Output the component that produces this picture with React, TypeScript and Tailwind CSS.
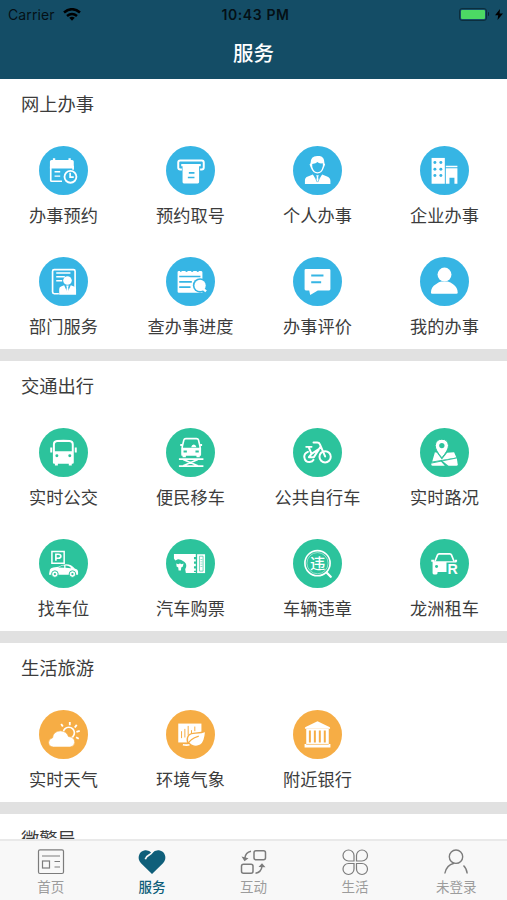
import type { ReactNode } from 'react'

interface Service {
  label: string
  icon: ReactNode
}

interface Section {
  title: string
  // text-* drives currentColor for the cut-outs inside each icon
  color: string
  items: Service[]
}

const CJK = "font-['Noto_Sans_CJK_SC',sans-serif]"

const sections: Section[] = [
  {
    title: '网上办事',
    color: 'text-[#36b5e4]',
    items: [
      {
        label: '办事预约',
        icon: (
          <>
            <path d="M33 68V47q0-5 5-5h4v-5h7v5h40v-5h7v5h4q5 0 5 5v21z" fill="#fff" />
            <path d="M35.500 62v42q0 2.500 3 2.500h31M103 60v12" stroke="#fff" strokeWidth="5" />
            <path d="M47 78h17M47 91h17" stroke="#fff" strokeWidth="4.500" />
            <circle cx="95" cy="93" r="18" stroke="#fff" strokeWidth="5.500" fill="currentColor" />
            <path d="M94 81v13h11" stroke="#fff" strokeWidth="5" />
          </>
        ),
      },
      {
        label: '预约取号',
        icon: (
          <>
            <path d="M48 71h-5q-6 0-6-6V50q0-6 6-6h65q6 0 6 6v15q0 6-6 6h-5" stroke="#fff" strokeWidth="6" />
            <path d="M46 54h59v7h-5v48q0 4-4 4H54q-4 0-4-4V61h-4z" fill="#fff" />
            <path d="M69 81h17M66 95h20" stroke="currentColor" strokeWidth="5" />
          </>
        ),
      },
      {
        label: '个人办事',
        icon: (
          <>
            <path d="M53 52q0-22 20-22h8q14 2 14 22l2 4-4 10q-5 17-19 17T54 66l-4-10z" fill="#fff" />
            <path d="M58 54q12-2 16-6 4 6 16 4 2 10-3 18-4 9-13 9t-13-9q-4-8-3-16z" fill="currentColor" />
            <path d="M36 115v-11q0-9 9-12l15-6 14 20 14-20 15 6q10 3 10 14v9z" fill="#fff" />
            <path d="M70 88h8l-2 6 2 14-4 4-4-4 2-14z" fill="#fff" />
            <path d="m62 84 11 25M86 84l-11 25" stroke="currentColor" strokeWidth="2" />
          </>
        ),
      },
      {
        label: '企业办事',
        icon: (
          <>
            <path d="M35 36h40v78H35z" fill="#fff" />
            <path d="M78 60h35v4H78zM78 67h35v47h-9V96H89v18H78z" fill="#fff" />
            <g fill="currentColor">
              <circle cx="45" cy="50" r="4.500" />
              <circle cx="63" cy="50" r="4.500" />
              <circle cx="45" cy="70" r="4.500" />
              <circle cx="63" cy="70" r="4.500" />
              <circle cx="45" cy="89" r="4.500" />
              <circle cx="63" cy="89" r="4.500" />
            </g>
          </>
        ),
      },
      {
        label: '部门服务',
        icon: (
          <>
            <path d="M60 111H46q-5 0-5-5V43q0-5 5-5h58q5 0 5 5v64" stroke="#fff" strokeWidth="5" />
            <path d="M52 48h43M52 60h26M52 72h18" stroke="#fff" strokeWidth="4.500" />
            <circle cx="86" cy="71" r="13" fill="#fff" />
            <path d="M61 114V97q0-7 7-9l8-3 10 23 10-23 8 3q8 2 8 9v17z" fill="#fff" />
            <path d="M82 86h8l-2 6 2 12-4 5-4-5 2-12z" fill="#fff" />
          </>
        ),
      },
      {
        label: '查办事进度',
        icon: (
          <>
            <path d="M35 45q0-3 4-3h3q2 6 6 0h10q4 7 8 0h9q4 7 8 0h9q4 7 8 0h5q5 0 5 4v62H39q-4 0-4-4z" fill="#fff" />
            <path d="M40 59h64M40 75h38M40 91h34" stroke="currentColor" strokeWidth="5" />
            <circle cx="103" cy="86" r="22" fill="currentColor" />
            <circle cx="103" cy="86" r="17" fill="#fff" />
            <path d="m112 96 9 8" stroke="#fff" strokeWidth="7" />
          </>
        ),
      },
      {
        label: '办事评价',
        icon: (
          <>
            <path d="M35 40q0-4 4-4h70q4 0 4 4v57q0 4-4 4H75l-23 14-3-14H39q-4 0-4-4z" fill="#fff" />
            <path d="M55 56h37M55 76h30" stroke="currentColor" strokeWidth="6" />
          </>
        ),
      },
      {
        label: '我的办事',
        icon: (
          <>
            <circle cx="74" cy="53" r="21" fill="#fff" />
            <path d="M33 108q0-18 15-26 10-7 16-8h20q8 2 16 8 14 9 14 26 0 3-4 3H37q-4 0-4-3z" fill="#fff" />
          </>
        ),
      },
    ],
  },
  {
    title: '交通出行',
    color: 'text-[#2cc39c]',
    items: [
      {
        label: '实时公交',
        icon: (
          <>
            <path d="M42 49q0-12 12-13 20-1 39 0 12 1 12 13v55q0 4-4 4h-2v5h-9v-5H57v5h-9v-5h-2q-4 0-4-4z" fill="#fff" />
            <path d="M48 70V50q0-8 8-8h35q8 0 8 8v20z" fill="currentColor" />
            <path d="M34 59h6v15h-6zM108 59h6v15h-6z" fill="#fff" />
            <circle cx="54" cy="84" r="4.500" fill="currentColor" />
            <circle cx="93" cy="84" r="4.500" fill="currentColor" />
          </>
        ),
      },
      {
        label: '便民移车',
        icon: (
          <>
            <path d="m49 57 5-21q1-4 6-4h32q5 0 6 4l5 21v24H49z" stroke="#fff" strokeWidth="5" />
            <path d="M47 60h59v21H47zM50 80h10v8H50zM92 80h10v8H92zM43 48h6v6h-6zM103 48h6v6h-6z" fill="#fff" />
            <path d="M76 58q2-8 8-8t8 8z" fill="#fff" />
            <path d="M53 71h10M89 71h10" stroke="currentColor" strokeWidth="6" />
            <path d="M39 94h74M39 115h74M52 95l44 19M96 95l-44 19" stroke="#fff" strokeWidth="5" />
          </>
        ),
      },
      {
        label: '公共自行车',
        icon: (
          <g stroke="#fff" strokeWidth="6" strokeLinecap="round" strokeLinejoin="round">
            <path d="M45 72q-11 4-11 15 2 16 16 16 9-1 12-7" />
            <circle cx="97" cy="87" r="17" />
            <path d="M40 57h16M48 59l8 19 29-19M56 78l-8 10h15l20-31M62 44h11q6 0 8 5l16 37" />
          </g>
        ),
      },
      {
        label: '实时路况',
        icon: (
          <>
            <path d="m45 73 6 2 15 20 16-20 21-2 7 16-73 12z" fill="#fff" />
            <path d="m66 98 45-8 3 20q0 4-4 4H86z" fill="#fff" />
            <path d="m36 104 26-4 13 14H38q-5 0-4-6z" fill="#fff" />
            <path d="m34 106 79-16" stroke="currentColor" strokeWidth="3" />
            <path d="M66 90Q46 67 46 53q2-19 20-19t20 19q0 14-20 37z" fill="#fff" stroke="currentColor" strokeWidth="3" />
            <circle cx="66" cy="53" r="8" fill="currentColor" />
          </>
        ),
      },
      {
        label: '找车位',
        icon: (
          <>
            <path d="M39 38h37v35H39z" stroke="#fff" strokeWidth="4.500" />
            <path d="M51 66V46h7q8 0 8 6t-8 6h-7" stroke="#fff" strokeWidth="5" />
            <path d="m30 108 3-16q2-5 10-6l16-2q11-8 23-8 16 0 26 13l7 3q4 3 3 16z" fill="#fff" />
            <path d="m58 86 12-6h6v7zM80 80q12 0 17 8l-17-1z" fill="currentColor" />
            <circle cx="48" cy="106" r="10" fill="#fff" stroke="currentColor" strokeWidth="3" />
            <circle cx="101" cy="106" r="10" fill="#fff" stroke="currentColor" strokeWidth="3" />
            <circle cx="48" cy="106" r="3.500" fill="currentColor" />
            <circle cx="101" cy="106" r="3.500" fill="currentColor" />
          </>
        ),
      },
      {
        label: '汽车购票',
        icon: (
          <>
            <path d="M24 45h66v58H60l-2-12q8-13-3-22-10-9-19-8l-8 4-4-6z" fill="#fff" />
            <path d="M94 46h24v57H94z" fill="#fff" />
            <path d="M101 52h11v45h-11z" stroke="currentColor" strokeWidth="2" />
            <path d="M104 62h6M104 69h6M104 76h6M104 83h6" stroke="currentColor" strokeWidth="1.500" />
            <path d="M88 54v46" stroke="currentColor" strokeWidth="7" strokeDasharray="7 7" />
            <path d="m31 74 6 2q5-4 10 0l6-2-2 9-5 3-1 9h-7l-1-9-5-3z" fill="#fff" />
          </>
        ),
      },
      {
        label: '车辆违章',
        icon: (
          <>
            <circle cx="74" cy="73" r="38" stroke="#fff" strokeWidth="5" />
            <circle cx="74" cy="73" r="32" stroke="#fff" strokeWidth="1.500" />
            <text x="74" y="90" textAnchor="middle" fontSize="46" fontWeight="500" fill="#fff">违</text>
            <path d="m102 102 12 12" stroke="#fff" strokeWidth="7" strokeLinecap="round" />
          </>
        ),
      },
      {
        label: '龙洲租车',
        icon: (
          <>
            <path d="m45 68 8-20q1-3 5-3h32q4 0 5 3l8 20" stroke="#fff" strokeWidth="5" />
            <path d="M34 63h9v6h-9zM105 63h7v6h-7zM38 67h72v4H80v29H53v3q0 4-4 4h-7q-4 0-4-4z" fill="#fff" />
            <circle cx="50" cy="83" r="4.500" fill="currentColor" />
            <text x="83" y="106" fontSize="43" fontWeight="700" fill="#fff" className="font-['Liberation_Sans',sans-serif]">R</text>
          </>
        ),
      },
    ],
  },
  {
    title: '生活旅游',
    color: 'text-[#f6ad45]',
    items: [
      {
        label: '实时天气',
        icon: (
          <>
            <circle cx="90" cy="69" r="17" stroke="#fff" strokeWidth="5" />
            <path d="m67 42 5 8M93 36v10M114 45l-6 8M123 63l-10 3M120 87l-8-5" stroke="#fff" strokeWidth="5.500" />
            <path d="M43 112q-14-2-14-14 0-11 12-14 2-20 24-21 18 1 24 17 19 2 19 18-1 12-14 14z" fill="#fff" stroke="currentColor" strokeWidth="2" />
          </>
        ),
      },
      {
        label: '环境气象',
        icon: (
          <>
            <path d="M37 41h70v57H37z" fill="#fff" />
            <path d="M47 64v21M57 57v26M67 48v29M77 61v12M87 50v14" stroke="currentColor" strokeWidth="3" />
            <path d="M65 97q-6-26 24-27 20-1 31-7-3 37-16 43-12 7-26 1z" fill="#fff" stroke="currentColor" strokeWidth="4" />
            <path d="M64 107q7-20 35-28" stroke="currentColor" strokeWidth="4" />
            <path d="M51 105q12 2 20 0" stroke="#fff" strokeWidth="5" />
          </>
        ),
      },
      {
        label: '附近银行',
        icon: (
          <>
            <path d="m74 34 36 17q3 2 2 6H36q-1-4 2-6z" fill="#fff" />
            <path d="M40 57h68v46h5v10H35v-10h5z" fill="#fff" />
            <path d="M51 62v36M66 62v36M81 62v36M96 62v36" stroke="currentColor" strokeWidth="6" />
            <path d="M40 104h68" stroke="currentColor" strokeWidth="2" />
          </>
        ),
      },
    ],
  },
  { title: '微警局', color: '', items: [] },
]

const tabs: (Service & { active?: boolean })[] = [
  {
    label: '首页',
    icon: (
      <g strokeWidth="1.200">
        <rect x="1.500" y="1.800" width="25" height="23.700" rx="1.500" />
        <path d="M5 8h18M17.500 13.500H23M17.500 19H23" />
        <rect x="5.500" y="13" width="7" height="7" />
      </g>
    ),
  },
  {
    label: '服务',
    active: true,
    icon: (
      <>
        <path d="M14 26 3 15.200Q0 12 .800 8 2 3 7 2.200q4-.500 7 3 3-3.500 7-3 5 .800 6.200 5.800Q28 12 25 15.200z" fill="currentColor" stroke="none" />
        <path d="M7.300 11.300q1.200-3.300 3.600-4.200 2.400-.800 4-3.900" stroke="#f8f8f8" strokeWidth="1.700" />
      </>
    ),
  },
  {
    label: '互动',
    icon: (
      <g strokeWidth="1.500">
        <rect x="15" y="2.800" width="11.500" height="9" rx="2" />
        <rect x="2.500" y="16.200" width="11.500" height="9" rx="2" />
        <path d="M12 3.300q-5.500 1-6.200 7M16.500 25.300q5.700-1 6.500-7" />
        <path d="m2.500 8.500 3 4.700 4-3zM19.500 19l3.500-3.700 3.500 4z" fill="currentColor" stroke="none" />
      </g>
    ),
  },
  {
    label: '生活',
    icon: (
      <g strokeWidth="1.200">
        <path d="M13 13H7.500A5.500 5.500 0 1 1 13 7.500zM15.500 13V7.500A5.500 5.500 0 1 1 21 13zM13 15.500V21a5.500 5.500 0 1 1-5.500-5.500zM15.500 15.500H21a5.500 5.500 0 1 1-5.500 5.500z" />
      </g>
    ),
  },
  {
    label: '未登录',
    icon: (
      <g strokeWidth="1.400">
        <circle cx="14" cy="8.700" r="6.700" />
        <path d="M2.800 25.500q1.500-8.500 9.200-10.300M21.500 17.500q3.200 3 3.700 8" />
      </g>
    ),
  },
]

function StatusBar() {
  return (
    <div className="flex h-7 items-center px-2 font-[Inter,sans-serif] text-black/80">
      <div className="flex flex-1 items-center gap-2">
        <span className="text-[14px] tracking-[0.1px]">Carrier</span>
        <svg viewBox="0 0 18 13" className="h-[13px] w-[18px]" fill="none" stroke="#000" strokeWidth="2.600">
          <path d="M1 4.500q8-6.500 16 0M4 8q5-4 10 0" />
          <path d="M6.200 9.800q2.800-2 5.600 0L9 12.800z" fill="#000" stroke="none" />
        </svg>
      </div>
      <span className="pl-1 text-[14px] font-semibold tracking-[0.600px]">10:43 PM</span>
      <div className="flex flex-1 items-center justify-end gap-1">
        <div className="flex items-center gap-px">
          <div className="h-[13px] w-7 rounded-[3px] border border-black/40 p-px">
            <div className="h-full rounded-[1px] bg-[#4cd964]" />
          </div>
          <div className="h-1 w-px rounded-r bg-black/50" />
        </div>
        <svg viewBox="0 0 8 11" className="-mr-1 ml-0.5 h-[11px] w-2" fill="#000">
          <path d="M5 0 0 6.200h3.200L2.500 11 8 4.500H4.600z" />
        </svg>
      </div>
    </div>
  )
}

function ServiceItem({ label, icon, color }: Service & { color: string }) {
  return (
    <button className="flex h-[111px] flex-col items-center">
      <svg viewBox="0 0 148 148" className={`h-[49px] w-[49px] shrink-0 ${color}`} fill="none">
        <circle cx="74" cy="74" r="74" fill="currentColor" />
        {icon}
      </svg>
      <span className="mt-2 whitespace-nowrap text-[17.200px] leading-6 text-[#3c3c3c]">{label}</span>
    </button>
  )
}

export default function App() {
  return (
    <div className={`flex h-[900px] w-[507px] flex-col overflow-hidden bg-white ${CJK}`}>
      <header className="h-[79px] shrink-0 bg-[#144d66]">
        <StatusBar />
        <h1 className="text-center text-[20.500px] font-medium leading-[48px] text-white">服务</h1>
      </header>

      <main className="min-h-0 flex-1 overflow-hidden">
        {sections.map((s) => (
          <section key={s.title} className="border-b-12 border-[#e1e1e1]">
            <h2 className="h-[67px] pl-[21px] text-[18.300px] leading-[48px] text-[#3c3c3c]">{s.title}</h2>
            <div className="-mb-[19px] grid grid-cols-[repeat(4,127px)]">
              {s.items.map((item) => (
                <ServiceItem key={item.label} {...item} color={s.color} />
              ))}
            </div>
          </section>
        ))}
      </main>

      {/* Tab bar */}
      <nav className="grid h-[61px] shrink-0 grid-cols-5 border-t-2 border-[#e9e9e9] bg-[#f8f8f8]">
        {tabs.map((t) => (
          <button key={t.label} className={`flex flex-col items-center pt-[7px] ${t.active ? 'text-[#0f5f7a]' : 'text-[#7c7c7c]'}`}>
            <svg viewBox="0 0 28 28" className="size-7 shrink-0" fill="none" stroke="currentColor">
              {t.icon}
            </svg>
            <span className={`text-[13.500px] leading-5 ${t.active ? 'font-medium' : 'text-[#9c9c9c]'}`}>{t.label}</span>
          </button>
        ))}
      </nav>
    </div>
  )
}
